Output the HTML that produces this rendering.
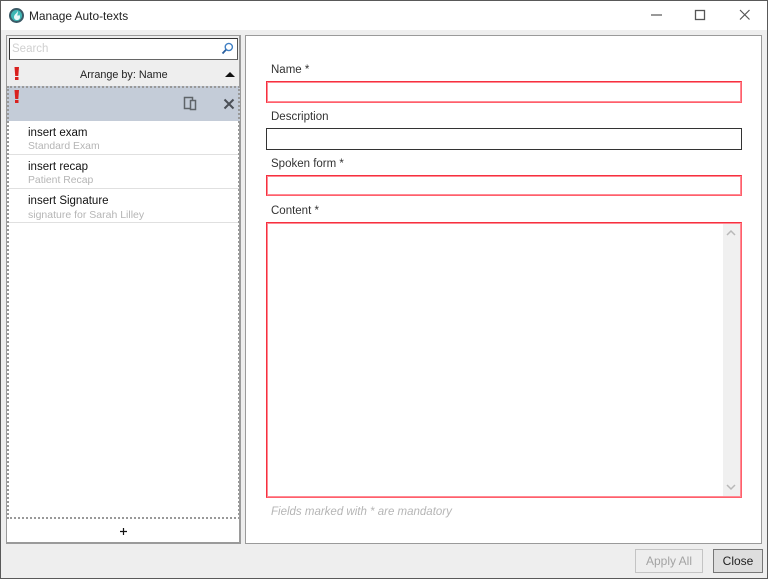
<!DOCTYPE html>
<html>
<head>
<meta charset="utf-8">
<style>
html,body{margin:0;padding:0;width:768px;height:579px;overflow:hidden;background:#eee;font-family:"Liberation Sans",sans-serif;color:#222}
.a{position:absolute;box-sizing:border-box}
.t{position:absolute;white-space:nowrap;font-size:11.5px;line-height:14px}
.red{border:1px solid #f5303f;border-bottom-color:#ff5f6b;border-right-color:#ff5f6b;box-shadow:inset 0 0 0 1px #ff8a94;background:#fff;left:266px;width:476px}
</style>
</head>
<body>
<div class="a" style="left:0;top:0;width:768px;height:579px;border:1px solid #595959;background:#eee"></div>
<div class="a" style="left:1px;top:1px;width:766px;height:29px;background:#fff"></div>

<svg class="a" style="left:8px;top:7px" width="17" height="17" viewBox="0 0 17 17">
<circle cx="8.500" cy="8.500" r="7.500" fill="#3b5a66"/>
<circle cx="8.500" cy="8.500" r="5.500" fill="#3fb6b4"/>
<path d="M9.500 3.500C10 6 6 7 6 10c0 2 1.500 3 3 3s3-1 3-3c0-1-.5-2-1-2.500 0 1-1 1.500-1.500 1C9 8 10.500 6 9.500 3.500z" fill="#e8f8f8"/>
</svg>
<div class="t" style="left:29px;top:9px;font-size:11.900px;color:#222">Manage Auto-texts</div>

<svg class="a" style="left:640px;top:5px" width="120" height="20" viewBox="0 0 120 20">
<path d="M11 10H22" stroke="#555" stroke-width="1.200"/>
<rect x="55.500" y="5.500" width="9" height="9" fill="none" stroke="#555" stroke-width="1.300"/>
<path d="M100 5L109.500 14.500M109.500 5L100 14.500" stroke="#555" stroke-width="1.200"/>
</svg>

<!-- Left panel -->
<div class="a" style="left:6px;top:35px;width:235px;height:509px;background:#fff;border:1px solid #9a9a9a;border-width:1px 2px 2px 1px"></div>
<div class="a" style="left:7px;top:36px;width:232px;height:25px;background:#eee"></div>
<div class="a" style="left:9px;top:38px;width:229px;height:22px;background:#fff;border:1px solid #333;border-right-color:#555;border-bottom-color:#666"></div>
<div class="t" style="left:12px;top:42px;color:#d0d0d0">Search</div>
<svg class="a" style="left:220px;top:41px" width="15" height="15" viewBox="0 0 15 15">
<circle cx="8.800" cy="6" r="3.600" fill="none" stroke="#3f7fc4" stroke-width="1.400"/>
<path d="M6 8.800L2.500 12.500" stroke="#2a5f9e" stroke-width="1.800"/>
</svg>

<div class="a" style="left:7px;top:61px;width:232px;height:25px;background:#eee"></div>
<svg class="a" style="left:14px;top:67px" width="6" height="14" viewBox="0 0 6 14"><path d="M.5 0H5L4.300 9H1.200z" fill="#d9201e"/><rect x="1" y="10" width="3.500" height="3" fill="#d9201e"/></svg>
<div class="t" style="left:80px;top:68px;font-size:10.800px;color:#222">Arrange by: Name</div>
<svg class="a" style="left:224px;top:71px" width="12" height="7" viewBox="0 0 12 7"><path d="M1 6H11L6 1z" fill="#111"/></svg>

<div class="a" style="left:7px;top:86px;width:233px;height:35px;background:#c4ccd8"></div>
<svg class="a" style="left:14px;top:90px" width="6" height="14" viewBox="0 0 6 14"><path d="M.5 0H5L4.300 9H1.200z" fill="#d9201e"/><rect x="1" y="10" width="3.500" height="3" fill="#d9201e"/></svg>
<svg class="a" style="left:182px;top:96px" width="16" height="16" viewBox="0 0 16 16">
<rect x="2.500" y="1.500" width="8" height="11" fill="none" stroke="#5f6469" stroke-width="1.500"/>
<rect x="8.500" y="4.500" width="5" height="9" fill="#c4ccd8" stroke="#5f6469" stroke-width="1.500"/>
</svg>
<svg class="a" style="left:222px;top:97px" width="14" height="14" viewBox="0 0 14 14">
<path d="M2.500 2.500L11.500 11.500M11.500 2.500L2.500 11.500" stroke="#4b5057" stroke-width="2"/>
</svg>

<div class="t" style="left:28px;top:126px;font-size:11.500px;color:#111">insert exam</div>
<div class="t" style="left:28px;top:140px;font-size:10.400px;color:#b5b5b5">Standard Exam</div>
<div class="a" style="left:8px;top:154px;width:231px;height:1px;background:#e0e0e0"></div>
<div class="t" style="left:28px;top:160px;font-size:11.500px;color:#111">insert recap</div>
<div class="t" style="left:28px;top:174px;font-size:10.400px;color:#b5b5b5">Patient Recap</div>
<div class="a" style="left:8px;top:188px;width:231px;height:1px;background:#e0e0e0"></div>
<div class="t" style="left:28px;top:194px;font-size:11.500px;color:#111">insert Signature</div>
<div class="t" style="left:28px;top:208px;font-size:10.500px;color:#b5b5b5">signature for Sarah Lilley</div>
<div class="a" style="left:8px;top:222px;width:231px;height:1px;background:#e0e0e0"></div>

<div class="a" style="left:7px;top:86px;width:233px;height:433px;border:2px dotted #999"></div>

<svg class="a" style="left:119px;top:527px" width="9" height="9" viewBox="0 0 9 9"><path d="M1 4.500H8M4.500 1V8" stroke="#111" stroke-width="1.200"/></svg>

<!-- Right panel -->
<div class="a" style="left:245px;top:35px;width:517px;height:509px;background:#fff;border:1px solid #9a9a9a"></div>

<div class="t" style="left:271px;top:63px;color:#333">Name *</div>
<div class="a red" style="top:81px;height:22px"></div>
<div class="t" style="left:271px;top:110px;color:#333">Description</div>
<div class="a" style="left:266px;top:128px;width:476px;height:22px;background:#fff;border:1px solid #333"></div>
<div class="t" style="left:271px;top:157px;color:#333">Spoken form *</div>
<div class="a red" style="top:175px;height:21px"></div>
<div class="t" style="left:271px;top:204px;color:#333">Content *</div>
<div class="a red" style="top:222px;height:276px"></div>
<div class="a" style="left:723px;top:224px;width:17px;height:272px;background:#f0f0f0"></div>
<svg class="a" style="left:725px;top:229px" width="12" height="8" viewBox="0 0 12 8"><path d="M2 6L6 2L10 6" fill="none" stroke="#b8b8b8" stroke-width="1.500"/></svg>
<svg class="a" style="left:725px;top:483px" width="12" height="8" viewBox="0 0 12 8"><path d="M2 2L6 6L10 2" fill="none" stroke="#b8b8b8" stroke-width="1.500"/></svg>
<div class="t" style="left:271px;top:505px;font-size:11.500px;font-style:italic;color:#b5b5b5">Fields marked with * are mandatory</div>

<!-- Buttons -->
<div class="a" style="left:635px;top:549px;width:68px;height:24px;border:1px solid #c4c4c4;background:#eee;color:#a3a3a3;font-size:12px;line-height:23px;text-align:center">Apply All</div>
<div class="a" style="left:713px;top:549px;width:50px;height:24px;border:1px solid #777;background:#dedede;color:#222;font-size:12px;line-height:23px;text-align:center">Close</div>
</body>
</html>
